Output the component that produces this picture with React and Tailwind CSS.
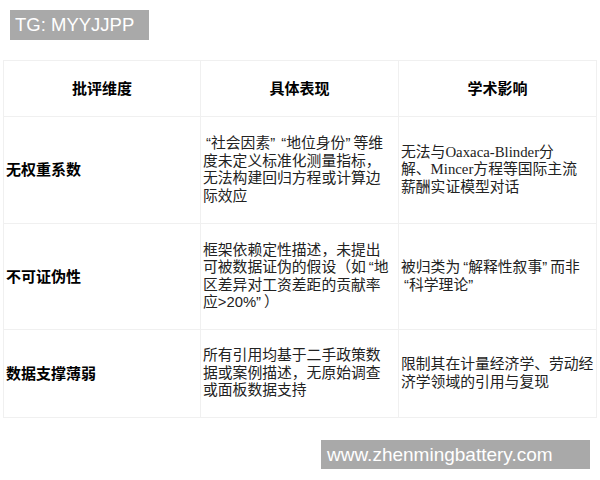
const cjk = { fontFamily: '"Liberation Sans", "Noto Sans CJK SC", sans-serif' };

const Serif = ({ children }) => (
  <span className="font-['Liberation_Serif',serif]">{children}</span>
);

// half-width quote marks, as the source renders them
const Quotes = ({ text }) =>
  text.split(/([“”])/).map((part, i) =>
    part === '“' ? (
      <span key={i} className="inline-block w-[8px] text-right">“</span>
    ) : part === '”' ? (
      <span key={i} className="inline-block w-[8px] text-left">”</span>
    ) : (
      part
    )
  );

const rows = [
  {
    label: '无权重系数',
    detail: ['“社会因素”“地位身份”等维', '度未定义标准化测量指标，', '无法构建回归方程或计算边', '际效应'],
    impact: [
      <>无法与<Serif>Oaxaca-Blinder</Serif>分</>,
      <>解、<Serif>Mincer</Serif>方程等国际主流</>,
      '薪酬实证模型对话',
    ],
  },
  {
    label: '不可证伪性',
    detail: ['框架依赖定性描述，未提出', '可被数据证伪的假设（如“地', '区差异对工资差距的贡献率', '应>20%”）'],
    impact: ['被归类为“解释性叙事”而非', '“科学理论”'],
  },
  {
    label: '数据支撑薄弱',
    detail: ['所有引用均基于二手政策数', '据或案例描述，无原始调查', '或面板数据支持'],
    impact: ['限制其在计量经济学、劳动经', '济学领域的引用与复现'],
  },
];

const Lines = ({ lines }) =>
  lines.map((line, i) => (
    <span key={i} className="block whitespace-nowrap">
      {typeof line === 'string' ? <Quotes text={line} /> : line}
    </span>
  ));

export default function App() {
  return (
    <div className="w-[600px] h-[480px] bg-white relative overflow-hidden text-[#222]" style={cjk}>
      <div className="pt-[10px] pl-[10px]">
        <div className="w-[139px] h-[30px] bg-[#a9a9a9] text-white text-[18.5px] leading-[30px] pl-[5px] font-['Liberation_Sans',sans-serif]">
          TG: MYYJJPP
        </div>
      </div>

      <table className="ml-[3px] mt-[20px] w-[593px] table-fixed border-collapse text-[14.8px] leading-[17.5px]">
        <colgroup>
          <col className="w-[197px]" />
          <col className="w-[198px]" />
          <col className="w-[198px]" />
        </colgroup>
        <thead>
          <tr className="h-[56px]">
            {['批评维度', '具体表现', '学术影响'].map((h) => (
              <th key={h} className="border border-[#f0f0f0] text-center font-bold text-black text-[15px]">
                {h}
              </th>
            ))}
          </tr>
        </thead>
        <tbody>
          {rows.map((r, i) => (
            <tr key={r.label} className={i === 0 ? 'h-[107px]' : i === 1 ? 'h-[106px]' : 'h-[88px]'}>
              <td className="border border-[#f0f0f0] pl-[2px] align-middle font-bold text-black text-[15px]">
                {r.label}
              </td>
              <td className="border border-[#f0f0f0] pl-[2px] pr-0 align-middle">
                <Lines lines={r.detail} />
              </td>
              <td className="border border-[#f0f0f0] pl-[2px] pr-0 align-middle">
                <Lines lines={r.impact} />
              </td>
            </tr>
          ))}
        </tbody>
      </table>

      <div className="flex justify-end pr-[10px] mt-[22px]">
        <div className="w-[269px] h-[29px] bg-[#a9a9a9] text-white text-[19px] leading-[29px] pl-[6px] font-['Liberation_Sans',sans-serif]">
          www.zhenmingbattery.com
        </div>
      </div>
    </div>
  );
}
